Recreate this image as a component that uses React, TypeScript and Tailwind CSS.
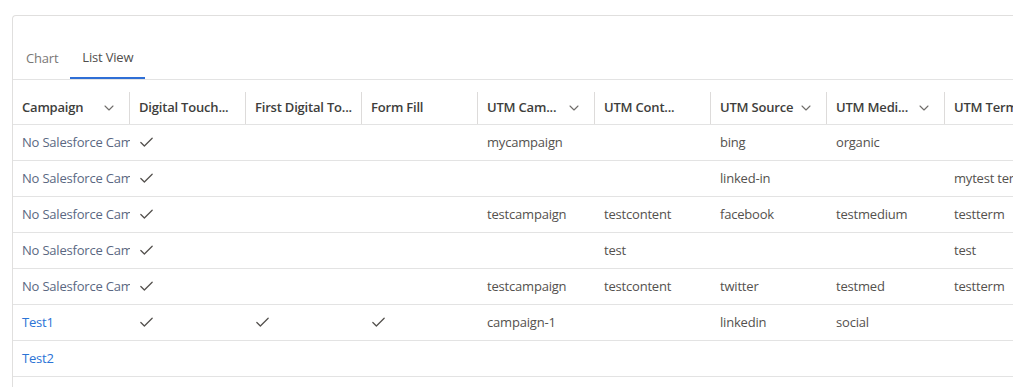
import React from "react";
import { Check, ChevronDown } from "lucide-react";

type Col = { label: string; width: string; sortable?: boolean };

const columns: Col[] = [
  { label: "Campaign", width: "w-[117px]", sortable: true },
  { label: "Digital Touch...", width: "w-[116px]" },
  { label: "First Digital To...", width: "w-[116px]" },
  { label: "Form Fill", width: "w-[116px]" },
  { label: "UTM Cam...", width: "w-[117px]", sortable: true },
  { label: "UTM Cont...", width: "w-[116px]" },
  { label: "UTM Source", width: "w-[116px]", sortable: true },
  { label: "UTM Medi...", width: "w-[118px]", sortable: true },
  { label: "UTM Term", width: "w-[116px]" },
];

type Row = {
  campaign: string;
  isLink?: boolean;
  digital?: boolean;
  firstDigital?: boolean;
  formFill?: boolean;
  utm: string[];
};

const NO_SF = "No Salesforce Campaign";

const rows: Row[] = [
  { campaign: NO_SF, digital: true, utm: ["mycampaign", "", "bing", "organic", ""] },
  { campaign: NO_SF, digital: true, utm: ["", "", "linked-in", "", "mytest term"] },
  { campaign: NO_SF, digital: true, utm: ["testcampaign", "testcontent", "facebook", "testmedium", "testterm"] },
  { campaign: NO_SF, digital: true, utm: ["", "test", "", "", "test"] },
  { campaign: NO_SF, digital: true, utm: ["testcampaign", "testcontent", "twitter", "testmed", "testterm"] },
  { campaign: "Test1", isLink: true, digital: true, firstDigital: true, formFill: true, utm: ["campaign-1", "", "linkedin", "social", ""] },
  { campaign: "Test2", isLink: true, utm: ["", "", "", "", ""] },
];

function Tick({ on }: { on?: boolean }) {
  if (!on) return null;
  return <Check className="w-[17px] h-[17px] text-[#54514e]" strokeWidth={1.8} />;
}

export default function App() {
  return (
    <div className="w-[1024px] h-[387px] bg-white pt-[15px] pl-[12px] overflow-hidden font-['Open_Sans',sans-serif] text-[13px] tracking-[-0.015em]">
      <div className="w-[1001px] h-[372px] border-l border-t border-[#e0dfde] rounded-tl-[4px] overflow-hidden">
        {/* Tabs */}
        <div className="flex pt-[23px] border-b border-[#e3e3e3]">
          <div className="h-10 pl-[13px] pr-[12px] flex items-center text-[#7a7876]">Chart</div>
          <div className="h-10 px-[12px] flex items-center text-[#514f4d] border-b-2 border-[#2f6fd6] -mb-px">List View</div>
        </div>

        {/* List view */}
        <div className="pt-3">
          <div className="flex h-[33px] border-b border-[#e3e3e3]">
            {columns.map((c, i) => (
              <div
                key={c.label}
                className={`${c.width} shrink-0 flex items-center justify-between pl-[9px] pr-[12px] ${i < columns.length - 1 ? "border-r border-[#dddbda]" : ""}`}
              >
                <span className="font-semibold text-[#3e3e3c] whitespace-nowrap">{c.label}</span>
                {c.sortable && <ChevronDown className="w-[16px] h-[16px] text-[#706e6b] shrink-0" strokeWidth={1.6} />}
              </div>
            ))}
          </div>

          {rows.map((r, idx) => (
            <div key={idx} className="flex h-[36px] border-b border-[#e3e3e3] text-[#54514e]">
              <div className="w-[117px] shrink-0 flex items-center pl-[9px] overflow-hidden whitespace-nowrap">
                <span className={r.isLink ? "text-[#2b74d6]" : "text-[#5a6882]"}>{r.campaign}</span>
              </div>
              <div className="w-[116px] shrink-0 flex items-center pl-[8px]"><Tick on={r.digital} /></div>
              <div className="w-[116px] shrink-0 flex items-center pl-[8px]"><Tick on={r.firstDigital} /></div>
              <div className="w-[116px] shrink-0 flex items-center pl-[8px]"><Tick on={r.formFill} /></div>
              {r.utm.map((v, j) => (
                <div
                  key={j}
                  className={`${columns[4 + j].width} shrink-0 flex items-center pl-[9px] overflow-hidden whitespace-nowrap`}
                >
                  {v}
                </div>
              ))}
            </div>
          ))}
        </div>
      </div>
    </div>
  );
}
